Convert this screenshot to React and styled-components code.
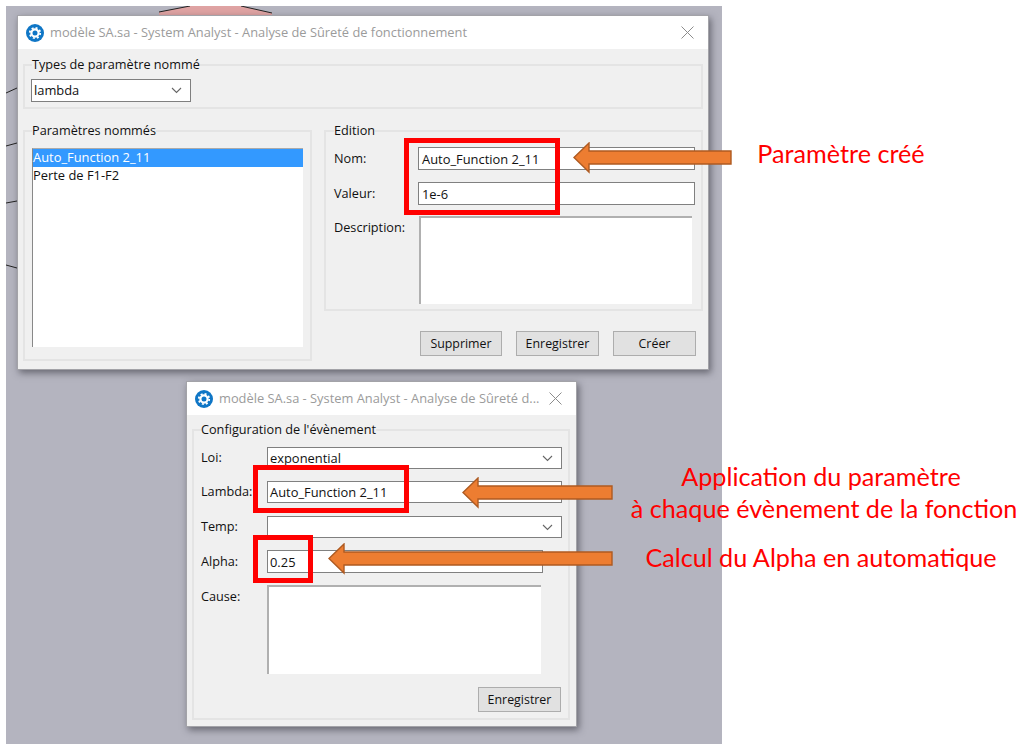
import React from "react";
import styled, { createGlobalStyle } from "styled-components";

const Global = createGlobalStyle`
  html, body { margin: 0; padding: 0; background: #fff; }
  body { font-family: "Open Sans", "Noto Sans", sans-serif; }
  * { box-sizing: border-box; }
`;
const Stage = styled.div`position: relative; width: 1036px; height: 749px; padding: 6px; overflow: hidden; background: #fff;`;
const Desktop = styled.div`position: relative; width: 716px; height: 738px; background: #b4b4bf;`;
const DiagramBits = styled.svg`position: absolute; left: 0; top: 0; width: 716px; height: 738px;`;
const Win = styled.section`
  position: absolute; left: ${p => p.$x}px; top: ${p => p.$y}px; width: ${p => p.$w}px; height: ${p => p.$h}px;
  display: flex; flex-direction: column; background: #f0f0f0; border: 1px solid #a3a3a8;
  box-shadow: 2px 3px 7px rgba(40,40,50,.55);
`;
const TitleBar = styled.header`
  height: 33px; flex: none; display: flex; align-items: center; gap: 6px; padding: 0 14px 0 8px; background: #fff;
  color: #9b9b9b; font-size: 12.85px; white-space: nowrap;
`;
const TitleText = styled.span`flex: 1; overflow: hidden; padding-bottom: 2px;`;
const Body = styled.div`flex: 1; min-height: 0; display: flex; flex-direction: column; padding: ${p => p.$pad};`;
const Group = styled.fieldset`
  margin: 0; min-width: 0; border: 2px solid #e4e4e4; padding: ${p => p.$pad};
  display: flex; flex-direction: column; flex: ${p => p.$flex || "none"};
`;
const Legend = styled.legend`
  margin-left: ${p => p.$ml || 0}px; padding: 0 0 2px; font-size: 12.7px; line-height: 16px; color: #111;
`;
const Combo = styled.div`
  display: flex; align-items: center; justify-content: space-between; width: ${p => p.$w ? p.$w + "px" : "auto"}; flex: ${p => p.$w ? "none" : 1};
  height: ${p => p.$h}px; padding: 0 8px 0 2px; background: #fff; border: 1px solid #7f7f7f; color: #111; font-size: 12.9px; line-height: 1;
`;
const Field = styled.div`
  display: flex; align-items: center; height: ${p => p.$h}px; width: ${p => p.$w ? p.$w + "px" : "auto"}; flex: ${p => p.$w ? "none" : 1};
  padding-left: ${p => p.$pl || 3}px; background: #fff; border: 1px solid #808080; color: #111; font-size: 12.9px;
`;
const Memo = styled.div`
  height: ${p => p.$h}px; width: ${p => p.$w}px; background: #fff; border-top: 2px solid #b0b0b0; border-left: 2px solid #b0b0b0;
`;
const Split = styled.div`display: flex; gap: 12px; margin-top: 13px;`;
const LeftCol = styled.div`width: 289px; display: flex;`;
const RightCol = styled.div`width: 379px; display: flex; flex-direction: column;`;
const List = styled.ul`
  list-style: none; margin: 0; padding: 0; height: 199px; background: #fff; border-left: 1px solid #888; border-top: 1px solid #aaa;
  font-size: 12.9px; color: #111;
`;
const Item = styled.li`
  height: 18px; line-height: 16px; background: ${p => p.$on ? "#3399ff" : "transparent"}; color: ${p => p.$on ? "#fff" : "#111"};
`;
const Row = styled.div`display: flex; align-items: ${p => p.$top ? "flex-start" : "center"}; margin-top: ${p => p.$mt || 0}px;`;
const Label = styled.label`
  width: ${p => p.$w}px; flex: none; font-size: 12.7px; color: #111;
  padding: ${p => p.$top ? "2px 0 0" : "0 0 2px"};
`;
const Buttons = styled.div`display: flex; justify-content: flex-end; gap: 14px; margin-top: ${p => p.$mt}px; padding-right: ${p => p.$pr}px;`;
const Btn = styled.button`
  width: ${p => p.$w || 83}px; height: 25px; padding: 0; background: #e1e1e1; border: 1px solid #adadad; font: inherit; font-size: 12.4px; color: #111;
`;
const Box = styled.div`
  position: absolute; left: ${p => p.$x}px; top: ${p => p.$y}px; width: ${p => p.$w}px; height: ${p => p.$h}px; border: 5px solid #ff0000;
`;
const ArrowSvg = styled.svg`position: absolute; left: ${p => p.$x}px; top: ${p => p.$y}px;`;
const Note = styled.div`
  position: absolute; left: ${p => p.$x}px; top: ${p => p.$y}px; width: ${p => p.$w}px; text-align: center; white-space: nowrap;
  font-family: Lato, "Noto Sans", sans-serif; font-size: 25.2px; line-height: 32px; color: #f00;
`;

const Chevron = () => (
  <svg width="11" height="7" viewBox="0 0 11 7" fill="none"><path d="M1 1l4.5 4.5L10 1" stroke="#666" strokeWidth="1.1" /></svg>
);
const CloseIcon = () => (
  <svg width="13" height="13" viewBox="0 0 13 13" fill="none"><path d="M.5.5l12 12M12.5.5l-12 12" stroke="#8c8c8c" strokeWidth="1" /></svg>
);
const AppIcon = () => (
  <svg width="18" height="18" viewBox="0 0 18 18">
    <circle cx="9" cy="9" r="9" fill="#0f76c6" />
    <circle cx="9" cy="9" r="3.6" fill="none" stroke="#fff" strokeWidth="2.2" />
    <circle cx="9" cy="9" r="5.2" fill="none" stroke="#fff" strokeWidth="1.8" strokeDasharray="2 2.08" />
  </svg>
);
const Arrow = ({ x, y, w }) => (
  <ArrowSvg $x={x} $y={y} width={w + 2} height="32" viewBox={`0 0 ${w + 2} 32`}>
    <path d={`M1 15.5 L16 1 V9 H${w} V22 H16 V30 Z`} fill="#ed7d31" stroke="#ae5a21" strokeWidth="1.4" />
  </ArrowSvg>
);

const Title = ({ children }) => (
  <TitleBar>
    <AppIcon />
    <TitleText>{children}</TitleText>
    <CloseIcon />
  </TitleBar>
);

export default function App() {
  return (
    <Stage>
      <Global />
      <Desktop>
        <DiagramBits viewBox="0 0 716 738">
          <path d="M153 6 L184 0 H235 L266 7 V12 H153Z" fill="#dfa3a3" />
          <path d="M153 6 L184 0M235 0 L266 7" stroke="#222" fill="none" />
          <path d="M0 87 L11 82M0 140 L11 137M0 197 L11 195M0 259 L11 262" stroke="#222" fill="none" />
        </DiagramBits>
        <Win $x={11} $y={9} $w={692} $h={355}>
          <Title>modèle SA.sa - System Analyst - Analyse de Sûreté de fonctionnement</Title>
          <Body $pad="7px 5px 0">
            <Group $pad="5px 6px 5px">
              <Legend $ml={1}>Types de paramètre nommé</Legend>
              <Combo $w={160} $h={23}>lambda<Chevron /></Combo>
            </Group>
            <Split>
              <LeftCol>
                <Group $flex={1} $pad="8px 7px 12px">
                  <Legend>Paramètres nommés</Legend>
                  <List>
                    <Item $on>Auto_Function 2_11</Item>
                    <Item>Perte de F1-F2</Item>
                  </List>
                </Group>
              </LeftCol>
              <RightCol>
                <Group $pad="7px 6px 5px 8px">
                  <Legend>Edition</Legend>
                  <Row><Label $w={84}>Nom:</Label><Field $h={23}>Auto_Function 2_11</Field></Row>
                  <Row $mt={12}><Label $w={84}>Valeur:</Label><Field $h={23}>1e-6</Field></Row>
                  <Row $mt={11} $top><Label $top $w={85}>Description:</Label><Memo $w={273} $h={88} /></Row>
                </Group>
                <Buttons $mt={20} $pr={7}>
                  <Btn $w={82}>Supprimer</Btn>
                  <Btn>Enregistrer</Btn>
                  <Btn>Créer</Btn>
                </Buttons>
              </RightCol>
            </Split>
          </Body>
        </Win>
        <Win $x={180} $y={375} $w={391} $h={346}>
          <Title>modèle SA.sa - System Analyst - Analyse de Sûreté d...</Title>
          <Body $pad="6px 6px 0 5px">
            <Group $pad="8px 6px 6px 7px">
              <Legend>Configuration de l'évènement</Legend>
              <Row><Label $w={66}>Loi:</Label><Combo $h={22}>exponential<Chevron /></Combo></Row>
              <Row $mt={12}><Label $w={66}>Lambda:</Label><Field $pl={2} $h={22}>Auto_Function 2_11</Field></Row>
              <Row $mt={13}><Label $w={66}>Temp:</Label><Combo $h={22}><span /><Chevron /></Combo></Row>
              <Row $mt={12}><Label $w={66}>Alpha:</Label><Field $pl={2} $w={276} $h={23}>0.25</Field></Row>
              <Row $mt={12} $top><Label $top $w={66}>Cause:</Label><Memo $w={274} $h={89} /></Row>
              <Buttons $mt={13} $pr={1}>
                <Btn>Enregistrer</Btn>
              </Buttons>
            </Group>
          </Body>
        </Win>
      </Desktop>
      <Box $x={404} $y={138} $w={156} $h={77} />
      <Box $x={253} $y={465} $w={156} $h={48} />
      <Box $x={253} $y={535} $w={60} $h={48} />
      <Arrow x={573} y={142} w={158} />
      <Arrow x={462} y={477} w={150} />
      <Arrow x={328} y={543} w={284} />
      <Note $x={701} $y={137} $w={280}>Paramètre créé</Note>
      <Note $x={621} $y={460} $w={400}>Application du paramètre</Note>
      <Note $x={624} $y={492} $w={400}>à chaque évènement de la fonction</Note>
      <Note $x={621} $y={541} $w={400}>Calcul du Alpha en automatique</Note>
    </Stage>
  );
}
